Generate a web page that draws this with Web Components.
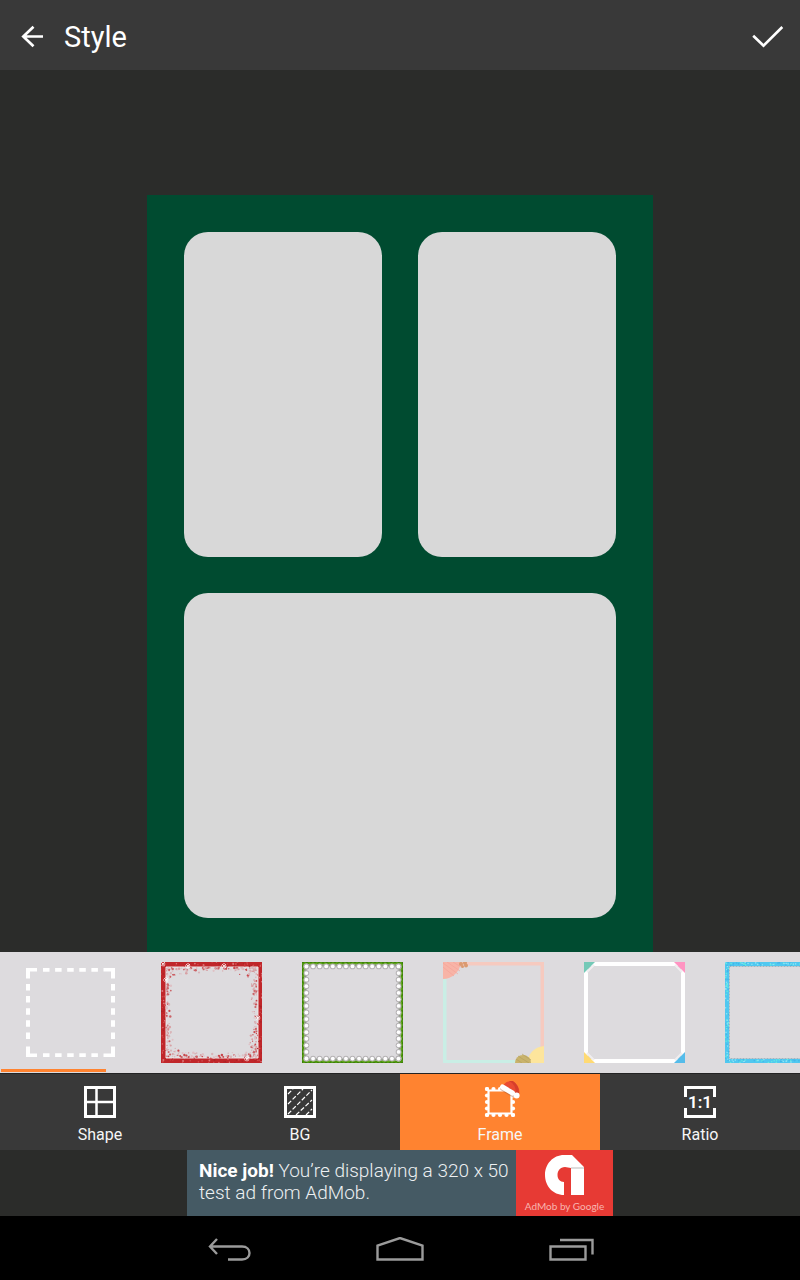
<!DOCTYPE html>
<html lang="en">
<head>
<meta charset="utf-8">
<meta name="viewport" content="width=device-width, initial-scale=1">
<title>Style</title>
<style>
body { margin: 0; background: #2b2c2a; font-family: Roboto, "Noto Sans", sans-serif; color: #fff; }
</style>
</head>
<body>
<style-app></style-app>

<script>
const reset = `
  *, *::before, *::after { box-sizing: border-box; }
  button { appearance: none; border: 0; padding: 0; margin: 0; background: none; color: inherit; font: inherit; cursor: pointer; }
  svg { display: block; }
`;

function define(name, markup) {
  customElements.define(name, class extends HTMLElement {
    constructor() {
      super();
      this.attachShadow({ mode: "open" }).innerHTML = markup;
    }
  });
}

define("title-bar", `
  <style>${reset}
    :host { display: flex; align-items: center; height: 70px; padding: 4px 16px 0 16px; background: #393939; }
    h1 { flex: 1; margin: 0 0 0 16px; font-size: 29px; line-height: 36px; font-weight: 400; }
  </style>
  <button aria-label="Back"><svg width="32" height="32" viewBox="0 0 32 32" fill="none" stroke="#fff" stroke-width="2.7"><path d="M27 15.500H7M17.500 5.700L7.300 15.500L17.500 25.300"/></svg></button>
  <h1><slot></slot></h1>
  <button aria-label="Apply"><svg width="32" height="32" viewBox="0 0 32 32" fill="none" stroke="#fff" stroke-width="2.6"><path d="M1.200 14.700L11.500 24.700L30.300 6"/></svg></button>
`);

define("collage-board", `
  <style>${reset}
    :host { display: flex; justify-content: center; padding-top: 125px; }
    .board { display: grid; grid-template: 1fr 1fr / 1fr 1fr; gap: 36px; width: min(506px, 100% - 48px); padding: 37px 37px 34px; background: #004b30; }
    .cell { border-radius: 24px; background: #d8d8d8; }
    .wide { grid-column: span 2; }
  </style>
  <div class="board"><button class="cell" aria-label="Photo 1"></button><button class="cell" aria-label="Photo 2"></button><button class="cell wide" aria-label="Photo 3"></button></div>
`);

/* Small seeded generator, so that the speckles are the same on every load. */
function seeded(seed) {
  return () => (seed = (seed * 16807) % 2147483647) / 2147483647;
}

/* A point at distance d inside edge number side, at t along it. */
function onEdge(side, t, d) {
  return side === 0 ? [t, d] : side === 1 ? [101 - d, t] : side === 2 ? [t, 101 - d] : [d, t];
}

const artwork = {
  none() {
    let s = '<path d="M6 16.500V6H17V9.500H10V16.500zM83.500 6H95V16.500H91V9.500H83.500zM6 84.500H10V91.500H17V95H6zM91 84.500H95V95H83.500V91.500H91z"/>';
    for (let i = 0; i < 5; i++) {
      const p = 23 + i * 12.1;
      s += `<path d="M${p} 6h6.500v3.700h-6.500zM${p} 91.300h6.500v3.700h-6.500zM6 ${p - 1}h4v6.500h-4zM91 ${p - 1}h4v6.500h-4z"/>`;
    }
    return `<g fill="#fff">${s}</g>`;
  },
  snow() {
    const r = seeded(77);
    let s = '<path d="M0 0H101V101H0zM5 5V96H97V5z" fill="#c0262a" fill-rule="evenodd"/><path d="M5 5H97V96H5z" fill="none" stroke="#eee4e5" stroke-width="1"/>';
    const dot = (p, size, c) => { s += `<circle cx="${p[0].toFixed(1)}" cy="${p[1].toFixed(1)}" r="${size.toFixed(1)}" fill="${c}"/>`; };
    for (let i = 0; i < 150; i++) dot(onEdge(i % 4, r() * 101, r() * 4.5), 0.4 + r() * 0.6, ["#dc7779", "#cf4a4d", "#a92327"][i % 3]);
    for (let i = 0; i < 360; i++) {
      const side = Math.floor(r() * 4);
      const t = 6 + r() * 89;
      const bend = Math.abs(t - 50) / 50;
      dot(onEdge(side, t, 5.5 + r() * r() * (5 + bend * bend * 15)), 0.4 + r() * 0.9, ["#d8a0a4", "#cb6266", "#dfc0c4", "#c9484d", "#d9b4b8"][i % 5]);
    }
    for (const [x, y] of [[2, 2], [27, 4], [63, 4], [97, 56], [86, 97], [5, 18]]) {
      s += `<path d="M${x - 3} ${y}h6M${x} ${y - 3}v6M${x - 2} ${y - 2}l4 4M${x + 2} ${y - 2}l-4 4" stroke="#fff" stroke-width=".9" stroke-dasharray="1.2 .7"/>`;
    }
    return s;
  },
  pearls() {
    let s = '<path d="M1.200 1.200H99.800V99.800H1.200z" fill="none" stroke="#4c960d" stroke-width="2.500"/><path d="M.5 .5H100.500V100.500H.5z" fill="none" stroke="#2f6a08" stroke-dasharray="1 3"/><path d="M2 2H99V99H2z" fill="none" stroke="#76b52b" stroke-width="1" stroke-dasharray="3 2"/><path d="M3.500 3.500H97.500V97.500H3.500z" fill="none" stroke="#8c9882" stroke-width="2"/>';
    for (let i = 0; i < 15; i++) {
      const p = 4.5 + i * 6.57;
      for (let side = 0; side < 4; side++) {
        const [x, y] = onEdge(side, p, 4.4);
        s += `<circle cx="${x}" cy="${y}" r="2.900" fill="#b5b2b4"/><circle cx="${x}" cy="${y}" r="1.900" fill="#fff"/>`;
      }
    }
    return s;
  },
  floral() {
    return `<path d="M0 0H3.500V101H0zM0 98H101V101H0z" fill="#c9eee5"/><path d="M0 0H101V101H97.500V3.500H0z" fill="#f6cabf"/>
      <path d="M0 0H18C17 10 9 17 0 17z" fill="#f8b4a7"/><path d="M0 5L11 14M0 1L15 12M4 0L17 9M10 0L18 5" stroke="#f5a499" stroke-width=".7"/>
      <g fill="#db9a70"><circle cx="18" cy="2" r="2"/><circle cx="22" cy="1" r="2"/><circle cx="23" cy="3.500" r="2"/><circle cx="19.500" cy="4.500" r="1.500"/></g>
      <path d="M101 84C91 85 85 92 84 101H101z" fill="#fde59c"/><path d="M72 101A8 8 0 1 1 88 101z" fill="#c9b36b"/>
      <path d="M73 97l6 4M75 94l11 7M79 92l9 6" stroke="#b5a05e" stroke-width=".7"/>`;
  },
  corners() {
    return `<path d="M2 2H99V99H2z" fill="none" stroke="#fff" stroke-width="4"/><path d="M3 10L10 3M91 3L98 10M3 91L10 98M98 91L91 98" stroke="#f0eef0" stroke-width="2"/>
      <path d="M0 0H11L0 11z" fill="#74c9b7"/><path d="M90 0H101V11z" fill="#ff94c2"/><path d="M0 90V101H11z" fill="#ffda73"/><path d="M101 90V101H90z" fill="#55bcea"/>`;
  },
  blue() {
    const r = seeded(31);
    let s = '<path d="M2 2H99V99H2z" fill="none" stroke="#50c8f0" stroke-width="4"/><path d="M4.500 4.500H96.500V96.500H4.500z" fill="none" stroke="#a2b5bf" stroke-width="1" stroke-dasharray="2 1"/>';
    for (let i = 0; i < 240; i++) {
      const [x, y] = onEdge(i % 4, r() * 100, 0.5 + r() * 3);
      s += `<circle cx="${x.toFixed(1)}" cy="${y.toFixed(1)}" r=".8" fill="${["#8de4f5", "#43b5e8", "#63edde"][i % 3]}"/>`;
    }
    return s;
  }
};

customElements.define("frame-option", class extends HTMLElement {
  constructor() {
    super();
    this.attachShadow({ mode: "open" });
  }
  connectedCallback() {
    this.shadowRoot.innerHTML = `
      <style>${reset} :host { display: block; flex: none; } button { display: block; }</style>
      <button aria-label="${this.getAttribute("label")}"><svg width="101" height="101" viewBox="0 0 101 101">${artwork[this.getAttribute("art")]()}</svg></button>`;
  }
});

define("frame-strip", `
  <style>${reset}
    :host { display: block; position: relative; height: 122px; overflow: hidden; background: #dddbde; border-bottom: 1px solid #232323; }
    .row { display: flex; gap: 40px; padding: 10px 20px; overflow: hidden; }
    .thumb { position: absolute; left: 1px; bottom: 1px; width: 105px; height: 3px; background: #ff8330; }
  </style>
  <div class="row"><slot></slot></div><div class="thumb"></div>
`);

define("tab-bar", `
  <style>${reset}
    :host { display: flex; height: 76px; background: #393939; }
  </style>
  <slot></slot>
`);

/* Perforated edge of the postage stamp. */
let teeth = "";
for (let i = 0; i < 5; i++) {
  const p = i * 6.5;
  for (const [x, y] of [[3 + p, 7], [3 + p, 33], [3, 7 + p], [29, 7 + p]]) {
    teeth += `<circle cx="${x}" cy="${y}" r="2.100"/>`;
  }
}
const tabIcons = {
  shape: `<g fill="none" stroke="#fff"><path d="M1.500 5.500H30.500V34.500H1.500z" stroke-width="3"/><path d="M12.500 6V34M2 20H30" stroke-width="2.500"/></g>`,
  bg: `<g fill="none" stroke="#fff"><path d="M1.500 5.500H30.500V34.500H1.500z" stroke-width="3"/><path d="M4 12L9 7M4 22L19 7M4 32L28 8M12 33L28 18M22 33L28 27" stroke-width="1.200" stroke-dasharray="4.500 2"/></g>`,
  frame: `<path d="M4.500 8.500H27.500V31.500H4.500z" fill="none" stroke="#fff" stroke-width="2.200"/><g fill="#fff">${teeth}</g>
    <path d="M18 6C20 0 26-3 31 1C35 4 36 9 35 13L32 14L18 6z" fill="#e94b32"/><path d="M25-1Q32 2 32 12L35 11Q35 3 29-1z" fill="#d63e2b"/>
    <path d="M19 6L29 12" stroke="#9c5436" stroke-width="6" stroke-linecap="round" opacity=".4"/><path d="M18.500 5L28.500 11" stroke="#fff" stroke-width="5" stroke-linecap="round"/><circle cx="32.600" cy="13.500" r="3" fill="#fff"/>`,
  ratio: `<path d="M1.500 15V5.500H30.500V15M1.500 26V34.500H30.500V26" fill="none" stroke="#fff" stroke-width="3"/><text x="16" y="26" text-anchor="middle" font-family="Roboto, sans-serif" font-size="17" font-weight="600" fill="#fff">1:1</text>`
};

customElements.define("tab-item", class extends HTMLElement {
  constructor() {
    super();
    this.attachShadow({ mode: "open" });
  }
  connectedCallback() {
    this.shadowRoot.innerHTML = `
      <style>${reset}
        :host { display: flex; flex: 1; }
        :host([selected]) { background: #ff8330; }
        button { flex: 1; display: flex; flex-direction: column; align-items: center; padding-top: 8px; font-size: 16px; line-height: 20px; }
        svg { overflow: visible; margin-bottom: 7px; }
        span { color: #f6f6f6; }
      </style>
      <button><svg width="32" height="36" viewBox="0 0 32 36" aria-hidden="true">${tabIcons[this.getAttribute("icon")]}</svg><span><slot></slot></span></button>`;
  }
});

define("ad-banner", `
  <style>${reset}
    :host { display: flex; justify-content: center; height: 66px; background: #2b2c2a; }
    a { display: flex; width: 426px; color: #edf0f2; text-decoration: none; background: #455a64; }
    p { flex: 1; margin: 0; padding: 10px 0 0 12px; font-size: 19px; line-height: 22px; font-weight: 300; white-space: nowrap; }
    b { font-weight: 700; color: #fff; }
    .brand { width: 97px; padding-top: 4px; background: #e73a34; color: #f8b5b0; font: 10px/12px Lato, sans-serif; text-align: center; white-space: nowrap; }
    svg { margin: 0 auto 4px 28px; }
  </style>
  <a href="#ad"><p><b>Nice job!</b> You’re displaying a 320 x 50<br>test ad from AdMob.</p>
  <div class="brand"><svg width="41" height="42" viewBox="0 0 41 42" aria-hidden="true"><path d="M28 1L40 13V41H27V14L21 13C16 13 13.500 17 13.500 21C13.500 25 16 28 20 28V41C9 41 1 32 1 21C1 10 9 1 20 1z" fill="#fff"/><path d="M27 13H40V15H27z" fill="#ddd"/><path d="M20 14H27V41H20z" fill="#e73a34"/></svg>AdMob by Google</div></a>
`);

define("system-bar", `
  <style>${reset}
    :host { display: flex; justify-content: center; height: 64px; padding-top: 6px; background: #000; }
    button { width: 171px; display: flex; align-items: center; justify-content: center; }
    svg { fill: none; stroke: #9b9b9b; stroke-width: 2.4; }
  </style>
  <button aria-label="Back"><svg width="44" height="28" viewBox="0 0 44 28"><path d="M10 2L3 9.500L10 17M2.500 9.500H35C45 9.500 45 22.500 35 22.500H21"/></svg></button>
  <button aria-label="Home"><svg width="48" height="28" viewBox="0 0 48 28"><path d="M1.500 22.500V8.500L24 1L46.500 8.500V22.500z"/></svg></button>
  <button aria-label="Recent apps"><svg width="46" height="28" viewBox="0 0 46 28"><path d="M2.500 9.500H37.500V22.500H2.500zM12 3H44.500V17.500"/></svg></button>
`);

define("style-app", `
  <style>${reset}
    :host { display: flex; flex-direction: column; min-height: 100vh; }
    collage-board { flex: 1; }
  </style>
  <title-bar>Style</title-bar>
  <collage-board></collage-board>
  <frame-strip>
    <frame-option art="none" label="No frame"></frame-option>
    <frame-option art="snow" label="Snow frame"></frame-option>
    <frame-option art="pearls" label="Pearl frame"></frame-option>
    <frame-option art="floral" label="Floral frame"></frame-option>
    <frame-option art="corners" label="Corner frame"></frame-option>
    <frame-option art="blue" label="Blue frame"></frame-option>
  </frame-strip>
  <tab-bar>
    <tab-item icon="shape">Shape</tab-item>
    <tab-item icon="bg">BG</tab-item>
    <tab-item icon="frame" selected>Frame</tab-item>
    <tab-item icon="ratio">Ratio</tab-item>
  </tab-bar>
  <ad-banner></ad-banner>
  <system-bar></system-bar>
`);
</script>
</body>
</html>
